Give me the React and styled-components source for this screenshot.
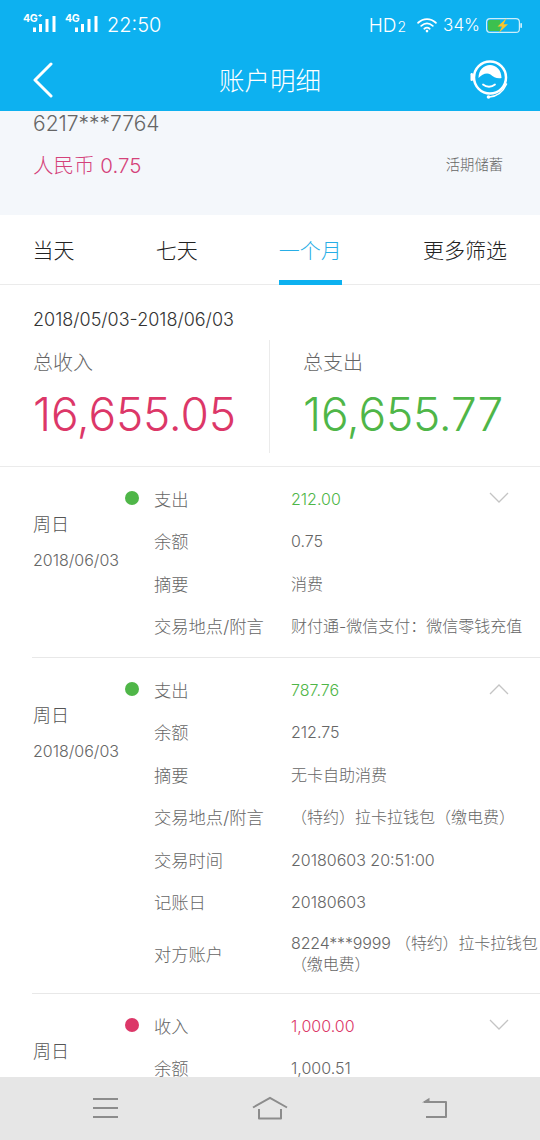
import React from 'react';
import styled, { createGlobalStyle } from 'styled-components';

const GlobalStyle = createGlobalStyle`
  html, body {
    margin: 0;
    padding: 0;
    background: #fff;
    font-family: Inter, "Noto Sans CJK SC", sans-serif;
    font-weight: 300;
  }
  * { box-sizing: border-box; }
`;

const Page = styled.div`
  width: 540px;
  height: 1140px;
  display: flex;
  flex-direction: column;
  overflow: hidden;
  background: #fff;
`;

const TopArea = styled.div`
  height: 111px;
  flex: none;
  background: #0db1f0;
  color: #fff;
  display: flex;
  flex-direction: column;
`;

const StatusBar = styled.div`
  height: 50px;
  display: flex;
  align-items: center;
  padding: 0 18px 0 23px;
`;

const Signal = styled.div`
  width: 33px;
  height: 18px;
  margin: -4px 9px 0 0;
  position: relative;
  flex: none;
`;

const NetLabel = styled.span`
  position: absolute;
  left: 0;
  top: 0;
  font-size: 10.500px;
  font-weight: 700;
  line-height: 10px;
  letter-spacing: -0.3px;
`;

const BarsWrap = styled.div`
  position: absolute;
  right: 0;
  bottom: 0;
  display: flex;
`;

const Clock = styled.span`
  font-size: 20px;
`;

const StatusRight = styled.div`
  margin-left: auto;
  display: flex;
  align-items: center;
`;

const HdText = styled.span`
  font-size: 19px;
  margin-right: 10px;
  small { font-size: 14px; margin-left: 1px; }
`;

const Percent = styled.span`
  font-size: 17px;
  margin: 0 6px 0 5px;
`;

const NavBar = styled.div`
  flex: 1;
  display: flex;
  align-items: center;
  justify-content: space-between;
  padding: 0 32px 1px 32px;
  position: relative;
`;

const Title = styled.div`
  position: absolute;
  left: 0;
  right: 0;
  top: 13px;
  text-align: center;
  font-size: 25.500px;
  line-height: 36px;
`;

const Account = styled.div`
  height: 104px;
  flex: none;
  background: #f4f7fb;
  padding: 0 37px 0 33px;
`;

const CardNo = styled.div`
  font-size: 21px;
  line-height: 26px;
  color: #666;
`;

const BalanceRow = styled.div`
  margin-top: 15px;
  display: flex;
  align-items: center;
  justify-content: space-between;
`;

const Balance = styled.div`
  font-size: 20.500px;
  line-height: 28px;
  color: #d4427a;
`;

const AccountType = styled.div`
  font-size: 14.300px;
  color: #666;
  margin-bottom: 6px;
`;

const Tabs = styled.div`
  height: 70px;
  flex: none;
  display: flex;
  justify-content: space-between;
  padding: 0 33px 0 32.500px;
  border-bottom: 1px solid #ebebeb;
`;

const Tab = styled.div`
  height: 70px;
  padding-top: 20px;
  font-size: 21px;
  line-height: 32px;
  color: ${(p) => (p.$active ? '#28aee6' : '#222')};
  border-bottom: 5px solid ${(p) => (p.$active ? '#0db1f0' : 'transparent')};
`;

const DateRange = styled.div`
  padding: 23px 33px 0;
  font-size: 18px;
  line-height: 24px;
  color: #333;
`;

const Summary = styled.div`
  display: flex;
  margin-top: 8px;
  height: 113px;
  flex: none;
`;

const SummaryCol = styled.div`
  width: ${(p) => p.$w}px;
  padding-left: ${(p) => p.$pad}px;
  border-left: ${(p) => (p.$divider ? '1px solid #ebebeb' : 'none')};
`;

const SummaryLabel = styled.div`
  margin-top: 9px;
  font-size: 20px;
  line-height: 28px;
  color: #666;
`;

const SummaryValue = styled.div`
  margin-top: 10px;
  font-size: 46px;
  line-height: 54px;
  letter-spacing: -0.2px;
  color: ${(p) => p.$color};
`;

const List = styled.div`
  margin-top: 13px;
  border-top: 1px solid #ebebeb;
  flex: 1;
  min-height: 0;
  overflow: hidden;
`;

const Item = styled.div`
  margin-left: 32px;
  display: flex;
  padding: 11px 0 9px;
  border-bottom: 1px solid #e8e8e8;
`;

const DayCol = styled.div`
  width: 93px;
  flex: none;
  padding: 32px 0 0 1px;
`;

const Day = styled.div`
  font-size: 18px;
  line-height: 30px;
  color: #555;
`;

const DayDate = styled.div`
  margin-top: 8px;
  font-size: 16px;
  line-height: 24px;
  color: #666;
`;

const Dot = styled.div`
  width: 14px;
  height: 14px;
  border-radius: 50%;
  flex: none;
  margin: 13px 15px 0 0;
  background: ${(p) => p.$color};
`;

const Rows = styled.div`
  flex: 1;
  min-width: 0;
`;

const Row = styled.div`
  display: flex;
  align-items: center;
  min-height: 42.500px;
  padding: ${(p) => (p.$tall ? '9px 0' : '0')};
`;

const Label = styled.div`
  width: 137px;
  flex: none;
  font-size: 17.300px;
  line-height: 21px;
  color: #666;
  white-space: nowrap;
`;

const Value = styled.div`
  flex: 1;
  font-size: 16px;
  line-height: 21px;
  letter-spacing: ${(p) => (p.$tall ? '-0.15px' : '0')};
  color: ${(p) => p.$color || '#666'};
  white-space: pre;
`;

const Chevron = styled.svg`
  flex: none;
  margin: 0 31px 2px 0;
`;

const BottomBar = styled.div`
  height: 63px;
  flex: none;
  background: #e6e6e6;
  display: flex;
  align-items: center;
  justify-content: space-between;
  padding: 0 92px 1px 92px;
`;

const green = '#4fb648';
const red = '#dc3768';

const items = [
  {
    color: green,
    open: false,
    rows: [
      ['支出', '212.00'],
      ['余额', '0.75'],
      ['摘要', '消费'],
      ['交易地点/附言', '财付通-微信支付：微信零钱充值'],
    ],
  },
  {
    color: green,
    open: true,
    rows: [
      ['支出', '787.76'],
      ['余额', '212.75'],
      ['摘要', '无卡自助消费'],
      ['交易地点/附言', '（特约）拉卡拉钱包（缴电费）'],
      ['交易时间', '20180603 20:51:00'],
      ['记账日', '20180603'],
      ['对方账户', '8224***9999 （特约）拉卡拉钱包\n（缴电费）'],
    ],
  },
  {
    color: red,
    open: false,
    rows: [
      ['收入', '1,000.00'],
      ['余额', '1,000.51'],
    ],
  },
];

const SignalBars = () => (
  <svg width="23" height="16" viewBox="0 0 23 16" fill="#fff">
    <rect x="0" y="11.500" width="3" height="4.500" />
    <rect x="6" y="8" width="3" height="8" />
    <rect x="12.500" y="3" width="3" height="13" />
    <rect x="19.500" y="0" width="3" height="16" />
  </svg>
);

const Wifi = () => (
  <svg width="22" height="16" viewBox="0 0 24 18" fill="none" stroke="#fff" strokeWidth="2" strokeLinecap="round">
    <path d="M2 6.500C8 1 16 1 22 6.500" />
    <path d="M5.500 10C9.500 6.500 14.500 6.500 18.500 10" />
    <path d="M9 13.200C11 11.600 13 11.600 15 13.200" />
    <circle cx="12" cy="15.800" r="1.500" fill="#fff" stroke="none" />
  </svg>
);

const Battery = () => (
  <svg width="36" height="15" viewBox="0 0 36 15">
    <rect x="0.600" y="0.600" width="32.800" height="13.800" rx="3.500" fill="none" stroke="#cdeefb" strokeWidth="1.200" />
    <path d="M2 4a2 2 0 0 1 2-2H14v11H4a2 2 0 0 1-2-2z" fill="#3cc04f" />
    <rect x="34.300" y="5" width="1.700" height="5" rx="0.800" fill="#cdeefb" />
    <path d="M20.500 0.300 L11.500 8.500 H16 L13 14.700 L22 6.300 H17.500 Z" fill="#fbc52a" />
  </svg>
);

const BackIcon = () => (
  <svg width="22" height="36" viewBox="0 0 22 36" fill="none" stroke="#fff" strokeWidth="3" strokeLinecap="round" strokeLinejoin="round">
    <path d="M19 2 L3 18 L19 34" />
  </svg>
);

const ServiceIcon = () => (
  <svg width="40" height="40" viewBox="0 0 40 40" fill="none">
    <circle cx="22" cy="17.500" r="16" stroke="#fff" strokeWidth="2.500" />
    <path d="M10.500 18C10.500 10 16 5 22 5S33.500 10 33.500 18C29 19 25.500 17 22.500 14.500C18.500 12 14 14.500 10.500 18Z" fill="#fff" />
    <rect x="2.500" y="13" width="2.500" height="8" rx="1.200" fill="#fff" />
    <path d="M15 24.500C18.500 27.500 23.500 27.500 27 24.500" stroke="#fff" strokeWidth="1.800" strokeLinecap="round" />
    <path d="M38.500 24C35 32 30 36.500 21 37" stroke="#fff" strokeWidth="1.600" strokeLinecap="round" />
    <circle cx="20.500" cy="37" r="1.800" fill="#fff" />
  </svg>
);

const MenuIcon = () => (
  <svg width="26" height="22" viewBox="0 0 26 22" stroke="#8c8c8c" strokeWidth="2">
    <path d="M1 2H26M1 11H26M1 20H26" />
  </svg>
);

const HomeIcon = () => (
  <svg width="36" height="24" viewBox="0 0 36 24" fill="none" stroke="#8c8c8c" strokeWidth="2">
    <path d="M1 11.500 L18 2 L35 11.500" />
    <path d="M7 13V22.500H29V13" strokeLinejoin="round" />
  </svg>
);

const ReturnIcon = () => (
  <svg width="26" height="22" viewBox="0 0 26 22" fill="none" stroke="#8c8c8c" strokeWidth="2">
    <path d="M2 5H24V20H4" strokeLinejoin="round" />
    <path d="M0 5.500 L7.500 0.800 V5.500 Z" fill="#8c8c8c" stroke="none" />
  </svg>
);

const App = () => (
  <Page>
    <GlobalStyle />
    <TopArea>
      <StatusBar>
        <Signal>
          <NetLabel>4G⁺</NetLabel>
          <BarsWrap><SignalBars /></BarsWrap>
        </Signal>
        <Signal>
          <NetLabel>4G</NetLabel>
          <BarsWrap><SignalBars /></BarsWrap>
        </Signal>
        <Clock>22:50</Clock>
        <StatusRight>
          <HdText>HD<small>2</small></HdText>
          <Wifi />
          <Percent>34%</Percent>
          <Battery />
        </StatusRight>
      </StatusBar>
      <NavBar>
        <BackIcon />
        <Title>账户明细</Title>
        <ServiceIcon />
      </NavBar>
    </TopArea>

    <Account>
      <CardNo>6217***7764</CardNo>
      <BalanceRow>
        <Balance>人民币 0.75</Balance>
        <AccountType>活期储蓄</AccountType>
      </BalanceRow>
    </Account>

    <Tabs>
      <Tab>当天</Tab>
      <Tab>七天</Tab>
      <Tab $active>一个月</Tab>
      <Tab>更多筛选</Tab>
    </Tabs>

    <DateRange>2018/05/03-2018/06/03</DateRange>
    <Summary>
      <SummaryCol $w={269} $pad={33}>
        <SummaryLabel>总收入</SummaryLabel>
        <SummaryValue $color={red}>16,655.05</SummaryValue>
      </SummaryCol>
      <SummaryCol $w={271} $pad={33} $divider>
        <SummaryLabel>总支出</SummaryLabel>
        <SummaryValue $color={green}>16,655.77</SummaryValue>
      </SummaryCol>
    </Summary>

    <List>
      {items.map((item, i) => (
        <Item key={i}>
          <DayCol>
            <Day>周日</Day>
            <DayDate>2018/06/03</DayDate>
          </DayCol>
          <Dot $color={item.color} />
          <Rows>
            {item.rows.map(([label, value], j) => (
              <Row key={label} $tall={value.includes('\n')}>
                <Label>{label}</Label>
                <Value $color={j === 0 ? item.color : undefined} $tall={value.includes('\n')}>{value}</Value>
                {j === 0 && (
                  <Chevron width="20" height="12" viewBox="0 0 20 12" fill="none" stroke="#c4c4c4" strokeWidth="1.300">
                    <path d={item.open ? 'M1 11 L10 2 L19 11' : 'M1 1 L10 10 L19 1'} />
                  </Chevron>
                )}
              </Row>
            ))}
          </Rows>
        </Item>
      ))}
    </List>

    <BottomBar>
      <MenuIcon />
      <HomeIcon />
      <ReturnIcon />
    </BottomBar>
  </Page>
);

export default App;
